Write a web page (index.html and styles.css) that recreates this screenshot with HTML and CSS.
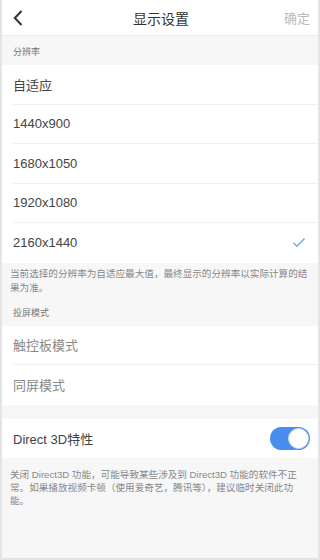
FILE: index.html
```html
<!DOCTYPE html>
<html lang="zh">
<head>
<meta charset="utf-8">
<link rel="stylesheet" href="styles.css">
</head>
<body>
<div class="screen">
  <header class="nav">
    <span class="back"><svg width="12" height="18" viewBox="0 0 12 18"><path d="M9.5 2 L2.8 9 L9.5 16" fill="none" stroke="#333" stroke-width="2"/></svg></span>
    <span class="title">显示设置</span>
    <span class="ok">确定</span>
  </header>
  <div class="sec-head first">分辨率</div>
  <ul class="list">
    <li class="row">自适应</li>
    <li class="row">1440x900</li>
    <li class="row">1680x1050</li>
    <li class="row">1920x1080</li>
    <li class="row last">2160x1440<svg class="check" width="14" height="11" viewBox="0 0 14 11"><path d="M1.5 6 L5 9.2 L12.5 1.5" fill="none" stroke="#6aaee0" stroke-width="1.5"/></svg></li>
  </ul>
  <p class="note">当前选择的分辨率为自适应最大值，最终显示的分辨率以实际计算的结果为准。</p>
  <div class="sec-head">投屏模式</div>
  <ul class="list">
    <li class="row dim">触控板模式</li>
    <li class="row dim last">同屏模式</li>
  </ul>
  <div class="gap"></div>
  <ul class="list">
    <li class="row last">Direct 3D特性<span class="toggle"><span class="knob"></span></span></li>
  </ul>
  <p class="note note2">关闭 Direct3D 功能，可能导致某些涉及到 Direct3D 功能的软件不正常。如果播放视频卡顿（使用爱奇艺，腾讯等），建议临时关闭此功能。</p>
</div>
</body>
</html>
```
FILE: styles.css
```css
html, body {
  margin: 0;
  padding: 0;
}
body {
  width: 320px;
  height: 560px;
  font-family: "Liberation Sans", "Noto Sans CJK SC", sans-serif;
  background: #f7f7f7;
}
.screen {
  box-sizing: border-box;
  width: 320px;
  height: 560px;
  border: 2px solid #e4e4e4;
  border-top: none;
  background: #f7f7f7;
  overflow: hidden;
}
.nav {
  height: 35px;
  background: #fff;
  display: flex;
  align-items: center;
  justify-content: space-between;
  padding: 0 8px 0 10px;
  border-bottom: 1px solid #ececec;
}
.back {
  display: flex;
  width: 40px;
}
.title {
  font-size: 14px;
  color: #333;
}
.ok {
  width: 40px;
  text-align: right;
  font-size: 13px;
  color: #bbb;
}
.sec-head {
  padding-top: 6px;
  height: 25px;
  line-height: 25px;
  padding-left: 11px;
  font-size: 9px;
  color: #777;
}
.sec-head.first {
  padding-top: 4px;
  height: 25px;
  line-height: 25px;
}
.list {
  list-style: none;
  margin: 0;
  padding: 0 0 0 11px;
  background: #fff;
}
.row {
  height: 39.5px;
  display: flex;
  align-items: center;
  justify-content: space-between;
  padding-right: 10px;
  font-size: 13px;
  color: #444;
  border-bottom: 1px solid #f0f0f0;
  box-sizing: border-box;
}
.row.last {
  border-bottom: none;
}
.row.dim {
  color: #888;
}
.check {
  margin-right: 2px;
}
.note {
  margin: 0;
  padding: 4px 8px 0 8px;
  font-size: 9.6px;
  line-height: 14px;
  color: #888;
}
.note2 {
  padding-top: 10px;
  line-height: 13px;
}
.gap {
  height: 14px;
}
.toggle {
  width: 40px;
  height: 23px;
  border-radius: 12px;
  background: #4a8df0;
  position: relative;
  margin-right: -2px;
}
.knob {
  position: absolute;
  right: 1px;
  top: 1px;
  width: 21px;
  height: 21px;
  box-sizing: border-box;
  border-radius: 50%;
  background: #fff;
  border: 1px solid #c8d6ea;
}
```
